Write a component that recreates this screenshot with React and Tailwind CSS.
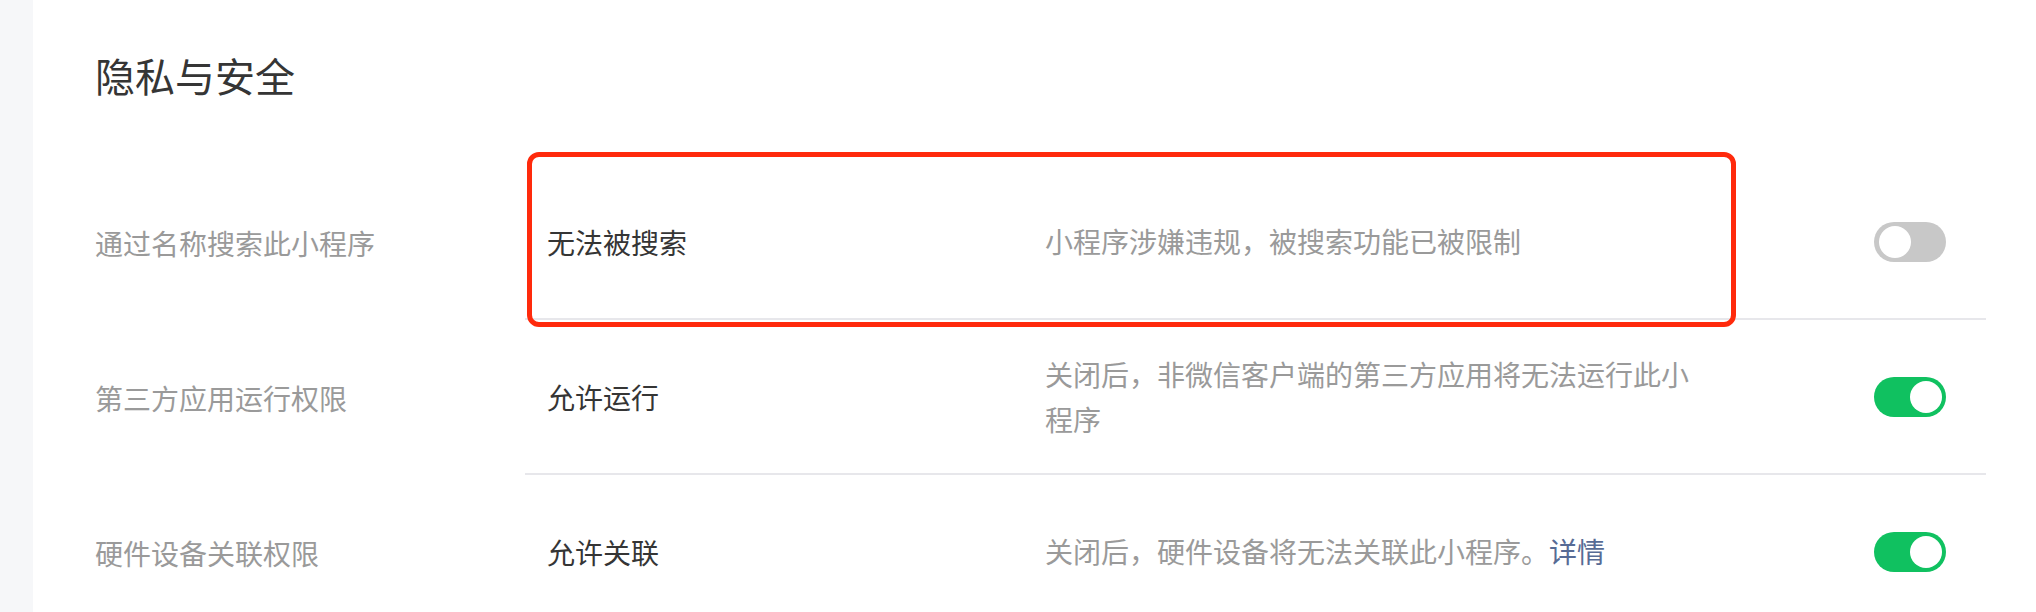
import { useState } from "react";

const rows = [
  {
    label: "通过名称搜索此小程序",
    value: "无法被搜索",
    desc: "小程序涉嫌违规，被搜索功能已被限制",
    on: false,
    marked: true,
  },
  {
    label: "第三方应用运行权限",
    value: "允许运行",
    desc: "关闭后，非微信客户端的第三方应用将无法运行此小程序",
    on: true,
  },
  {
    label: "硬件设备关联权限",
    value: "允许关联",
    desc: "关闭后，硬件设备将无法关联此小程序。",
    link: "详情",
    on: true,
  },
];

function Toggle({ on, onClick }) {
  return (
    <button
      onClick={onClick}
      className={`relative w-[72px] h-[40px] rounded-full shrink-0 ${on ? "bg-[#10c160]" : "bg-[#c8c8c8]"}`}
    >
      <span
        className={`absolute top-[4px] w-[32px] h-[32px] rounded-full bg-white ${on ? "left-[36px]" : "left-[5px]"}`}
      />
    </button>
  );
}

function Row({ row }) {
  const [on, setOn] = useState(row.on);
  return (
    <div className="flex">
      <div className="w-[430px] shrink-0 flex items-center text-[28px] text-[#9a9a9a]">
        {row.label}
      </div>
      <div className="relative flex-1 flex items-center min-h-[155px] pl-[22px] pr-[40px] border-b-2 border-[#e7e7eb]">
        <div className="w-[498px] shrink-0 text-[28px] text-[#353535]">{row.value}</div>
        <div className="w-[660px] text-[28px] leading-[45px] text-[#9a9a9a]">
          {row.desc}
          {row.link && <a className="text-[#576b95] cursor-pointer">{row.link}</a>}
        </div>
        <div className="flex-1" />
        <Toggle on={on} onClick={() => setOn(!on)} />

        {/* red annotation box */}
        {row.marked && (
          <div className="absolute left-[2px] top-[-13px] w-[1209px] h-[175px] border-[5px] border-[#ff2a0c] rounded-[12px] pointer-events-none" />
        )}
      </div>
    </div>
  );
}

export default function App() {
  return (
    <div
      className="flex w-[2036px] h-[612px] overflow-hidden bg-white"
      style={{ fontFamily: '"Noto Sans CJK SC", "Noto Sans", sans-serif' }}
    >
      <div className="w-[33px] shrink-0 bg-[#f6f7f9]" />
      <div className="flex-1 pl-[62px] pr-[50px] pt-[47px]">
        <h2 className="text-[40px] leading-[56px] text-[#353535] font-normal">隐私与安全</h2>
        <div className="mt-[62px]">
          {rows.map((r) => (
            <Row key={r.label} row={r} />
          ))}
        </div>
      </div>
    </div>
  );
}
